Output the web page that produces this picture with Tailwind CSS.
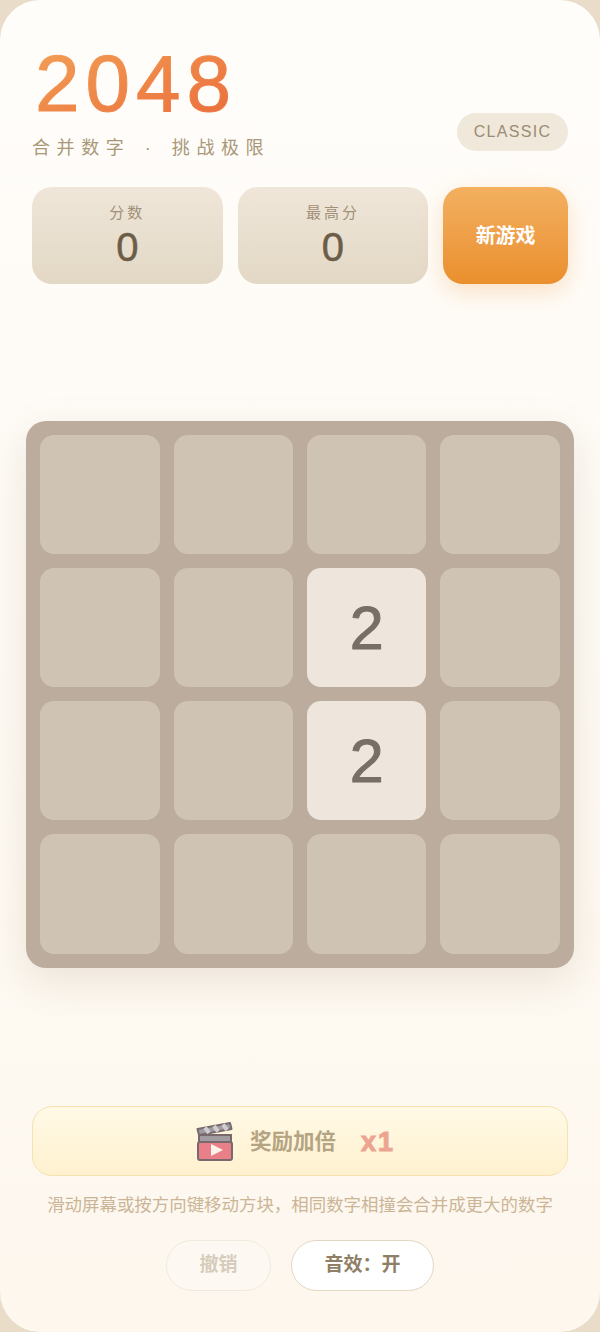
<!DOCTYPE html>
<html lang="zh">
<head>
  <meta charset="UTF-8">
  <meta name="viewport" content="width=device-width, initial-scale=1.0">
  <title>2048</title>
  <script src="https://cdn.jsdelivr.net/npm/@tailwindcss/browser@4"></script>
</head>
<body class="bg-[#e9dcc8] h-[1332px] overflow-hidden font-['Liberation_Sans','Noto_Sans_CJK_SC',sans-serif]">
  <div class="h-[1332px] rounded-[40px] bg-gradient-to-b from-[#fffdfa] to-[#fdf7ee] flex flex-col">

    <!-- header -->
    <div class="h-[187px] px-8 pt-[40px] flex justify-between">
      <div>
        <h1 class="w-fit ml-[3px] text-[80px] leading-[88px] tracking-[6px] [-webkit-text-stroke:1px_transparent] bg-gradient-to-br from-[#f2a055] to-[#ea6a3a] bg-clip-text text-transparent">2048</h1>
        <p class="mt-[7px] text-lg leading-[26px] tracking-[6.600px] [word-spacing:2.800px] text-[#a89878] whitespace-pre">合并数字 · 挑战极限</p>
      </div>
      <div class="mt-[73px] h-[38px] w-[111px] rounded-full bg-[#f0e8da] flex items-center justify-center text-base tracking-[1.300px] text-[#9c8c74]">CLASSIC</div>
    </div>

    <!-- scores -->
    <div class="px-8 flex gap-[15px] h-[97px]">
      <div class="w-[191px] rounded-[20px] bg-gradient-to-b from-[#efe6d9] to-[#e3d8c5] flex flex-col items-center pt-[17px]">
        <span class="text-[15px] leading-[18px] tracking-[3px] text-[#a09078]">分数</span>
        <span class="text-[40px] leading-[50px] [-webkit-text-stroke:0.5px_#6b5d48] text-[#6b5d48]">0</span>
      </div>
      <div class="w-[191px] rounded-[20px] bg-gradient-to-b from-[#efe6d9] to-[#e3d8c5] flex flex-col items-center pt-[17px]">
        <span class="text-[15px] leading-[18px] tracking-[3px] text-[#a09078]">最高分</span>
        <span class="text-[40px] leading-[50px] [-webkit-text-stroke:0.5px_#6b5d48] text-[#6b5d48]">0</span>
      </div>
      <button class="w-[125px] rounded-[20px] bg-gradient-to-b from-[#f3b05f] to-[#ea8f2c] shadow-[0_8px_24px_rgba(236,146,50,0.25)] text-white text-xl font-bold">新游戏</button>
    </div>

    <!-- board -->
    <div class="mt-[136.500px] ml-[26.350px] w-[547.500px] h-[547px] shrink-0 rounded-[20px] bg-[#bbac9d] p-[14px] grid grid-cols-4 grid-rows-4 gap-[14px] shadow-[0_12px_40px_rgba(120,90,50,0.14)]">
      <div class="rounded-[14px] bg-[#cfc3b4]"></div>
      <div class="rounded-[14px] bg-[#cfc3b4]"></div>
      <div class="rounded-[14px] bg-[#cfc3b4]"></div>
      <div class="rounded-[14px] bg-[#cfc3b4]"></div>
      <div class="rounded-[14px] bg-[#cfc3b4]"></div>
      <div class="rounded-[14px] bg-[#cfc3b4]"></div>
      <div class="rounded-[14px] bg-[#eee6dc] pt-[3px] flex items-center justify-center text-[61px] [-webkit-text-stroke:1px_#776e65] text-[#776e65]">2</div>
      <div class="rounded-[14px] bg-[#cfc3b4]"></div>
      <div class="rounded-[14px] bg-[#cfc3b4]"></div>
      <div class="rounded-[14px] bg-[#cfc3b4]"></div>
      <div class="rounded-[14px] bg-[#eee6dc] pt-[3px] flex items-center justify-center text-[61px] [-webkit-text-stroke:1px_#776e65] text-[#776e65]">2</div>
      <div class="rounded-[14px] bg-[#cfc3b4]"></div>
      <div class="rounded-[14px] bg-[#cfc3b4]"></div>
      <div class="rounded-[14px] bg-[#cfc3b4]"></div>
      <div class="rounded-[14px] bg-[#cfc3b4]"></div>
      <div class="rounded-[14px] bg-[#cfc3b4]"></div>
    </div>

    <!-- reward -->
    <button class="mt-[138.500px] mx-8 h-[70px] shrink-0 rounded-[20px] border border-[#f5e2b0] bg-gradient-to-b from-[#fff9e6] to-[#fff1cf] flex items-center justify-center pr-[9px]">
      <svg class="w-[38px] h-[40px]" viewBox="0 0 38 40">
        <rect x="2" y="21" width="34" height="18" rx="2" fill="#e97f88" stroke="#77696c" stroke-width="2"/>
        <path d="M3 21 V14 H35 V21 Z" fill="#a09ca2" stroke="#77696c" stroke-width="2"/>
        <path d="M1.500 8 L34 2 L35.500 8 L3 14 Z" fill="#a09ca2" stroke="#77696c" stroke-width="2" stroke-linejoin="round"/>
        <path d="M9 6.500 L13 12 M18 5 L22 10.500 M27 3.500 L31 9" stroke="#cfcdd2" stroke-width="4"/>
        <path d="M15 23 L27 29 L15 35 Z" fill="#fdf3ea"/>
      </svg>
      <span class="ml-[16px] pt-[2px] text-[21.500px] font-bold text-[#b5a482]">奖励加倍</span>
      <span class="ml-[25px] pt-[2px] text-[27px] font-bold tracking-[2px] [-webkit-text-stroke:1px_#eca491] text-[#eca491]">x1</span>
    </button>

    <p class="mt-[16px] text-center text-[17.450px] leading-[26px] text-[#cbb596]">滑动屏幕或按方向键移动方块，相同数字相撞会合并成更大的数字</p>

    <!-- actions -->
    <div class="mt-[21.500px] flex justify-center gap-[20px]">
      <button class="w-[105px] h-[51px] rounded-full border border-[#f1e9dd] bg-[#fdf9f2] text-[19px] font-bold text-[#d6ccbc]">撤销</button>
      <button class="w-[143px] h-[51px] rounded-full border border-[#e3d6c2] bg-white text-[19px] font-bold text-[#8f7f66]">音效：开</button>
    </div>
  </div>
</body>
</html>
